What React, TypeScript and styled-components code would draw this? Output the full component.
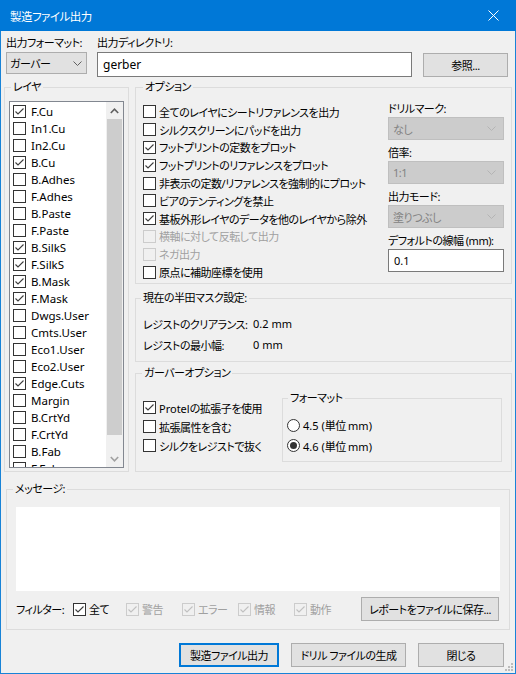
import React from "react";
import styled, { createGlobalStyle } from "styled-components";

const font = `"Noto Sans", "Noto Sans CJK JP", sans-serif`;

const GlobalStyle = createGlobalStyle`
  html, body {
    margin: 0;
    padding: 0;
    background: #f0f0f0;
  }
  body {
    font-family: ${font};
    font-size: 11px;
    letter-spacing: -0.5px;
    color: #000;
    font-feature-settings: "palt";
  }
  * {
    box-sizing: border-box;
  }
`;

const layers: [string, boolean][] = [
  ["F.Cu", true],
  ["In1.Cu", false],
  ["In2.Cu", false],
  ["B.Cu", true],
  ["B.Adhes", false],
  ["F.Adhes", false],
  ["B.Paste", false],
  ["F.Paste", false],
  ["B.SilkS", true],
  ["F.SilkS", true],
  ["B.Mask", true],
  ["F.Mask", true],
  ["Dwgs.User", false],
  ["Cmts.User", false],
  ["Eco1.User", false],
  ["Eco2.User", false],
  ["Edge.Cuts", true],
  ["Margin", false],
  ["B.CrtYd", false],
  ["F.CrtYd", false],
  ["B.Fab", false],
  ["F.Fab", false],
];

const options: { text: string; checked?: boolean; disabled?: boolean }[] = [
  { text: "全てのレイヤにシートリファレンスを出力" },
  { text: "シルクスクリーンにパッドを出力" },
  { text: "フットプリントの定数をプロット", checked: true },
  { text: "フットプリントのリファレンスをプロット", checked: true },
  { text: "非表示の定数/リファレンスを強制的にプロット" },
  { text: "ビアのテンティングを禁止" },
  { text: "基板外形レイヤのデータを他のレイヤから除外", checked: true },
  { text: "横軸に対して反転して出力", disabled: true },
  { text: "ネガ出力", disabled: true },
  { text: "原点に補助座標を使用" },
];

const drill = [
  { label: "ドリルマーク:", value: "なし" },
  { label: "倍率:", value: "1:1" },
  { label: "出力モード:", value: "塗りつぶし" },
];

const filters = [
  { text: "全て", disabled: false },
  { text: "警告", disabled: true },
  { text: "エラー", disabled: true },
  { text: "情報", disabled: true },
  { text: "動作", disabled: true },
];

const Check = ({ color }: { color: string }) => (
  <svg width="11" height="11" viewBox="0 0 11 11">
    <polyline
      points="1.5,5.5 4,8 9.5,2.5"
      fill="none"
      stroke={color}
      strokeWidth="1.1"
    />
  </svg>
);

const Chevron = ({ color }: { color: string }) => (
  <svg width="9" height="5" viewBox="0 0 9 5">
    <polyline points="0.5,0.5 4.5,4.5 8.5,0.5" fill="none" stroke={color} />
  </svg>
);

const CheckBox = ({
  checked,
  disabled,
}: {
  checked?: boolean;
  disabled?: boolean;
}) => (
  <Box $disabled={disabled}>
    {checked && <Check color={disabled ? "#c0c0c0" : "#3c3c3c"} />}
  </Box>
);

export default function App() {
  return (
    <>
      <GlobalStyle />
      <Window>
        <TitleBar>
          <span>製造ファイル出力</span>
          <svg width="11" height="11" viewBox="0 0 11 11">
            <path d="M0.5 0.5 L10.5 10.5 M10.5 0.5 L0.5 10.5" stroke="#fff" strokeWidth="1" />
          </svg>
        </TitleBar>

        <TopRow>
          <Field $w={81}>
            <FieldLabel>出力フォーマット:</FieldLabel>
            <Combo>
              <span>ガーバー</span>
              <Chevron color="#606060" />
            </Combo>
          </Field>
          <Field $w={315} $ml={10}>
            <FieldLabel>出力ディレクトリ:</FieldLabel>
            <TextInput>
              <Latin>gerber</Latin>
            </TextInput>
          </Field>
          <Button $w={85} $ml={11} $mt={17}>
            参照...
          </Button>
        </TopRow>

        <MainRow>
          <Group $w={125} $h={392}>
            <Legend>レイヤ</Legend>
            <LayerInner>
              <ListBox>
                <ListItems>
                  {layers.map(([name, on]) => (
                    <ListItem key={name}>
                      <CheckBox checked={on} />
                      <Latin>{name}</Latin>
                    </ListItem>
                  ))}
                </ListItems>
                <ScrollBar>
                  <ScrollArrow>
                    <svg width="9" height="6" viewBox="0 0 9 6">
                      <polyline points="0.8,5 4.5,1.2 8.2,5" fill="none" stroke="#606060" strokeWidth="1.6" />
                    </svg>
                  </ScrollArrow>
                  <ScrollTrack>
                    <ScrollThumb />
                  </ScrollTrack>
                  <ScrollArrow>
                    <svg width="9" height="6" viewBox="0 0 9 6">
                      <polyline points="0.8,1 4.5,4.8 8.2,1" fill="none" stroke="#a0a0a0" strokeWidth="1.6" />
                    </svg>
                  </ScrollArrow>
                </ScrollBar>
              </ListBox>
            </LayerInner>
          </Group>

          <RightCol>
            <Group $w={377} $h={204}>
              <Legend $ml={7}>オプション</Legend>
              <OptionsInner>
                <OptionList>
                  {options.map((o) => (
                    <CheckRow key={o.text} $disabled={o.disabled}>
                      <CheckBox checked={o.checked} disabled={o.disabled} />
                      <span>{o.text}</span>
                    </CheckRow>
                  ))}
                </OptionList>
                <DrillCol>
                  {drill.map((d) => (
                    <React.Fragment key={d.label}>
                      <DrillLabel>{d.label}</DrillLabel>
                      <DisabledCombo>
                        <span>{d.value}</span>
                        <Chevron color="#b4b4b4" />
                      </DisabledCombo>
                    </React.Fragment>
                  ))}
                  <DrillLabel>デフォルトの線幅 (mm):</DrillLabel>
                  <SmallInput>
                    <Latin>0.1</Latin>
                  </SmallInput>
                </DrillCol>
              </OptionsInner>
            </Group>

            <Group $w={377} $h={71} $mt={7}>
              <Legend $ml={5}>現在の半田マスク設定:</Legend>
              <MaskInner>
                <MaskRow>
                  <MaskLabel>レジストのクリアランス:</MaskLabel>
                  <Latin>0.2 mm</Latin>
                </MaskRow>
                <MaskRow>
                  <MaskLabel>レジストの最小幅:</MaskLabel>
                  <Latin>0 mm</Latin>
                </MaskRow>
              </MaskInner>
            </Group>

            <Group $w={377} $h={106} $mt={4}>
              <Legend>ガーバーオプション</Legend>
              <GerberInner>
                <GerberChecks>
                  <CheckRow $h={19}>
                    <CheckBox checked />
                    <span>
                      <Latin>Protel</Latin>の拡張子を使用
                    </span>
                  </CheckRow>
                  <CheckRow $h={19}>
                    <CheckBox />
                    <span>拡張属性を含む</span>
                  </CheckRow>
                  <CheckRow $h={19}>
                    <CheckBox />
                    <span>シルクをレジストで抜く</span>
                  </CheckRow>
                </GerberChecks>
                <Group $w={220} $h={71} $mt={11}>
                  <Legend $ml={5}>フォーマット</Legend>
                  <RadioList>
                    <RadioRow>
                      <Radio />
                      <span>
                        <Latin>4.5 (</Latin>単位 <Latin>mm)</Latin>
                      </span>
                    </RadioRow>
                    <RadioRow>
                      <Radio $on />
                      <span>
                        <Latin>4.6 (</Latin>単位 <Latin>mm)</Latin>
                      </span>
                    </RadioRow>
                  </RadioList>
                </Group>
              </GerberInner>
            </Group>
          </RightCol>
        </MainRow>

        <MessageGroup>
          <Group $w={504} $h={148}>
            <Legend>メッセージ:</Legend>
            <MessageInner>
              <MessageArea />
              <FilterRow>
                <FilterLabel>フィルター:</FilterLabel>
                {filters.map((f) => (
                  <FilterItem key={f.text} $disabled={f.disabled}>
                    <CheckBox checked disabled={f.disabled} />
                    <span>{f.text}</span>
                  </FilterItem>
                ))}
                <Button $w={138} $ml="auto">
                  レポートをファイルに保存...
                </Button>
              </FilterRow>
            </MessageInner>
          </Group>
        </MessageGroup>

        <ButtonRow>
          <Button $w={100} $focus>
            製造ファイル出力
          </Button>
          <Button $w={115}>ドリル ファイルの生成</Button>
          <Button $w={86}>閉じる</Button>
        </ButtonRow>

        <Grip>
          <svg width="8" height="8" viewBox="0 0 8 8">
            <rect x="6" y="0" width="2" height="2" fill="#bcbcbc" />
            <rect x="3" y="3" width="2" height="2" fill="#bcbcbc" />
            <rect x="6" y="3" width="2" height="2" fill="#bcbcbc" />
            <rect x="0" y="6" width="2" height="2" fill="#bcbcbc" />
            <rect x="3" y="6" width="2" height="2" fill="#bcbcbc" />
            <rect x="6" y="6" width="2" height="2" fill="#bcbcbc" />
          </svg>
        </Grip>
      </Window>
    </>
  );
}

const Latin = styled.span`
  letter-spacing: 0;
`;

const Window = styled.div`
  position: relative;
  width: 516px;
  height: 674px;
  background: #f0f0f0;
  border: 1px solid #1883d7;
  border-top: none;
  display: flex;
  flex-direction: column;
`;

const TitleBar = styled.div`
  height: 31px;
  margin: 0 -1px;
  flex: none;
  background: #0078d7;
  color: #fff;
  display: flex;
  align-items: center;
  justify-content: space-between;
  padding: 0 17px 0 10px;
  font-family: "Noto Sans CJK JP", sans-serif;
  font-size: 11.5px;
`;

const TopRow = styled.div`
  display: flex;
  align-items: flex-start;
  height: 49px;
  padding: 5px 0 0 5px;
  flex: none;
`;

const Field = styled.div<{ $w: number; $ml?: number }>`
  display: flex;
  flex-direction: column;
  width: ${(p) => p.$w}px;
  margin-left: ${(p) => p.$ml ?? 0}px;
`;

const FieldLabel = styled.div`
  height: 14px;
  line-height: 14px;
  margin-bottom: 2px;
  white-space: nowrap;
`;

const Combo = styled.div`
  height: 22px;
  display: flex;
  align-items: center;
  justify-content: space-between;
  padding: 0 4px 0 3px;
  background: #e1e1e1;
  border: 1px solid #adadad;
`;

const TextInput = styled.div`
  height: 25px;
  display: flex;
  align-items: center;
  padding: 0 5px;
  background: #fff;
  border: 1px solid #7a7a7a;
  font-size: 12px;
`;

const Button = styled.button<{
  $w: number;
  $ml?: number | "auto";
  $mt?: number;
  $focus?: boolean;
}>`
  width: ${(p) => p.$w}px;
  height: 24px;
  flex: none;
  margin-left: ${(p) => (p.$ml === "auto" ? "auto" : `${p.$ml ?? 0}px`)};
  margin-top: ${(p) => p.$mt ?? 0}px;
  padding: 0;
  background: #e1e1e1;
  border: ${(p) => (p.$focus ? "2px solid #0078d7" : "1px solid #adadad")};
  font: inherit;
  letter-spacing: inherit;
  color: #000;
  white-space: nowrap;
`;

const MainRow = styled.div`
  display: flex;
  gap: 6px;
  padding-left: 3px;
  height: 392px;
  flex: none;
`;

const Group = styled.fieldset<{ $w: number; $h: number; $mt?: number }>`
  width: ${(p) => p.$w}px;
  height: ${(p) => p.$h}px;
  margin: ${(p) => p.$mt ?? 0}px 0 0 0;
  padding: 0;
  border: 1px solid #dcdcdc;
  flex: none;
  min-width: 0;
`;

const Legend = styled.legend<{ $ml?: number }>`
  margin-left: ${(p) => p.$ml ?? 6}px;
  padding: 0 2px;
  height: 14px;
  line-height: 14px;
  white-space: nowrap;
`;

const LayerInner = styled.div`
  padding: 7px 4px 0 4px;
`;

const ListBox = styled.div`
  display: flex;
  height: 367px;
  width: 115px;
  border: 1px solid #828790;
  background: #fff;
  overflow: hidden;
`;

const ListItems = styled.div`
  flex: 1;
  padding: 1px 0 0 3px;
  overflow: hidden;
  font-size: 11.5px;
`;

const ListItem = styled.div`
  display: flex;
  align-items: center;
  gap: 5px;
  height: 17px;
  flex: none;
  white-space: nowrap;
`;

const ScrollBar = styled.div`
  width: 17px;
  flex: none;
  display: flex;
  flex-direction: column;
  background: #f0f0f0;
`;

const ScrollArrow = styled.div`
  height: 17px;
  flex: none;
  display: flex;
  align-items: center;
  justify-content: center;
`;

const ScrollTrack = styled.div`
  flex: 1;
  padding: 0 1px;
`;

const ScrollThumb = styled.div`
  height: 316px;
  background: #cdcdcd;
`;

const RightCol = styled.div`
  display: flex;
  flex-direction: column;
`;

const OptionsInner = styled.div`
  display: flex;
  padding: 9px 7px 0 7px;
`;

const OptionList = styled.div`
  flex: 1;
  min-width: 0;
  display: flex;
  flex-direction: column;
`;

const CheckRow = styled.div<{ $h?: number; $disabled?: boolean }>`
  display: flex;
  align-items: center;
  gap: 3px;
  height: ${(p) => p.$h ?? 17.8}px;
  color: ${(p) => (p.$disabled ? "#a0a0a0" : "#000")};
  white-space: nowrap;
`;

const Box = styled.span<{ $disabled?: boolean }>`
  width: 13px;
  height: 13px;
  flex: none;
  display: inline-flex;
  border: 1px solid ${(p) => (p.$disabled ? "#cccccc" : "#333333")};
  background: ${(p) => (p.$disabled ? "transparent" : "#fff")};
`;

const DrillCol = styled.div`
  width: 116px;
  flex: none;
  margin-top: -1px;
  display: flex;
  flex-direction: column;
`;

const DrillLabel = styled.div`
  height: 14px;
  line-height: 14px;
  margin-bottom: 1px;
  white-space: nowrap;
  &:not(:first-child) {
    margin-top: 6px;
  }
`;

const DisabledCombo = styled.div`
  height: 23px;
  display: flex;
  align-items: center;
  justify-content: space-between;
  padding: 0 7px 0 4px;
  background: #cccccc;
  border: 1px solid #bfbfbf;
  color: #838383;
`;

const SmallInput = styled.div`
  height: 23px;
  display: flex;
  align-items: center;
  padding: 0 5px;
  background: #fff;
  border: 1px solid #7a7a7a;
`;

const MaskInner = styled.div`
  padding: 8px 7px 0 7px;
`;

const MaskRow = styled.div`
  display: flex;
  align-items: center;
  height: 21px;
  white-space: nowrap;
`;

const MaskLabel = styled.span`
  width: 110px;
  flex: none;
`;

const GerberInner = styled.div`
  display: flex;
  align-items: flex-start;
  padding: 0 9px 0 7px;
`;

const GerberChecks = styled.div`
  flex: 1;
  padding-top: 18px;
  display: flex;
  flex-direction: column;
`;

const RadioList = styled.div`
  padding: 10px 0 0 4px;
`;

const RadioRow = styled.div`
  display: flex;
  align-items: center;
  gap: 3px;
  height: 20.5px;
  white-space: nowrap;
`;

const Radio = styled.span<{ $on?: boolean }>`
  width: 13px;
  height: 13px;
  flex: none;
  border-radius: 50%;
  border: 1px solid #333;
  background: #fff;
  display: inline-flex;
  align-items: center;
  justify-content: center;
  &::after {
    content: "";
    width: 7px;
    height: 7px;
    border-radius: 50%;
    background: ${(p) => (p.$on ? "#333" : "transparent")};
  }
`;

const MessageGroup = styled.div`
  margin: 10px 0 0 5px;
  flex: none;
`;

const MessageInner = styled.div`
  padding: 11px 9px 0 9px;
`;

const MessageArea = styled.div`
  height: 84px;
  background: #fff;
`;

const FilterRow = styled.div`
  display: flex;
  align-items: center;
  margin-top: 6px;
  height: 24px;
  padding-right: 1px;
`;

const FilterLabel = styled.span`
  width: 57px;
  flex: none;
  white-space: nowrap;
`;

const FilterItem = styled.div<{ $disabled?: boolean }>`
  display: flex;
  align-items: center;
  gap: 3px;
  width: 56px;
  flex: none;
  color: ${(p) => (p.$disabled ? "#a0a0a0" : "#000")};
  white-space: nowrap;
  &:first-of-type {
    width: 53px;
  }
`;

const ButtonRow = styled.div`
  display: flex;
  justify-content: flex-end;
  gap: 12px;
  margin-top: 13px;
  padding-right: 11px;
  flex: none;
`;

const Grip = styled.div`
  position: absolute;
  right: 2px;
  bottom: 2px;
  width: 8px;
  height: 8px;
  display: flex;
`;
